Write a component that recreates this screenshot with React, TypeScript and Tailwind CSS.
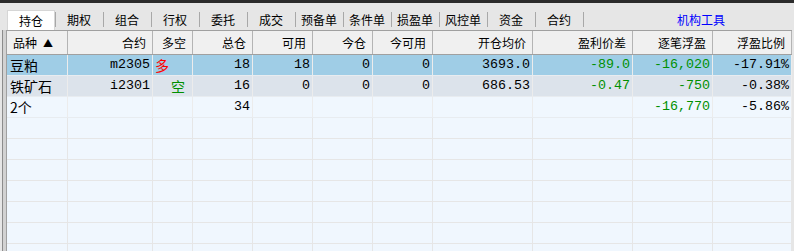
import React from "react";

type Col = { title: React.ReactNode; w: string; left?: boolean };

const cols: Col[] = [
  {
    title: (
      <>
        品种<span className="ml-[6px] text-[10px]">▲</span>
      </>
    ),
    w: "w-[61px]",
    left: true,
  },
  { title: "合约", w: "w-[85px]" },
  { title: "多空", w: "w-[40px]" },
  { title: "总仓", w: "w-[60px]" },
  { title: "可用", w: "w-[60px]" },
  { title: "今仓", w: "w-[60px]" },
  { title: "今可用", w: "w-[60px]" },
  { title: "开仓均价", w: "w-[100px]" },
  { title: "盈利价差", w: "w-[100px]" },
  { title: "逐笔浮盈", w: "w-[80px]" },
  { title: "浮盈比例", w: "w-[79px]" },
];

const tabs = ["持仓", "期权", "组合", "行权", "委托", "成交", "预备单", "条件单", "损盈单", "风控单", "资金", "合约"];

type Row = { bg: string; cells: React.ReactNode[] };

const G = "text-[#009000]";

const rows: Row[] = [
  {
    bg: "bg-[#9fcde6]",
    cells: [
      "豆粕",
      "m2305",
      <span className="text-[#ff0000]">多</span>,
      "18",
      "18",
      "0",
      "0",
      "3693.0",
      <span className={G}>-89.0</span>,
      <span className={G}>-16,020</span>,
      "-17.91%",
    ],
  },
  {
    bg: "bg-[#dce3eb]",
    cells: [
      "铁矿石",
      "i2301",
      <span className={G}>空</span>,
      "16",
      "0",
      "0",
      "0",
      "686.53",
      <span className={G}>-0.47</span>,
      <span className={G}>-750</span>,
      "-0.38%",
    ],
  },
  {
    bg: "bg-[#f0f7fe]",
    cells: ["2个", "", "", "34", "", "", "", "", "", <span className={G}>-16,770</span>, "-5.86%"],
  },
];

const cjk = "font-['Noto_Sans_CJK_SC',sans-serif]";
const mono = "font-['Liberation_Mono','Noto_Sans_CJK_SC',monospace]";

export default function App() {
  const empty = Array.from({ length: 8 });
  return (
    <div className="w-[794px] h-[251px] overflow-hidden bg-[#e6e6e6] flex flex-col">
      <div className="h-[3px] bg-[#2b2b2b] shrink-0" />

      {/* tab strip */}
      <div className={`h-[27px] shrink-0 flex items-end pl-[7px] ${cjk} text-[12px] text-black`}>
        {tabs.map((t, i) =>
          i === 0 ? (
            <div
              key={t}
              className="w-[48px] h-[20px] bg-white border border-b-0 border-[#d6d6d6] flex items-center justify-center"
            >
              {t}
            </div>
          ) : (
            <div key={t} className="w-[48px] h-[20px] flex items-center justify-center relative">
              <span className="absolute left-0 top-[2px] h-[15px] w-px bg-[#a8a8a8]" />
              {t}
            </div>
          )
        )}
        <div className="h-[20px] flex items-center relative pl-[94px] text-[#0000ff]">
          <span className="absolute left-0 top-[2px] h-[15px] w-px bg-[#a8a8a8]" />
          机构工具
        </div>
      </div>

      {/* grid */}
      <div className="flex flex-1 min-h-0">
        <div className="w-[7px] flex shrink-0">
          <div className="w-[2px]" />
          <div className="w-px bg-[#8c8c8c]" />
          <div className="w-[3px] bg-[#d2d2d2]" />
          <div className="w-px bg-[#a0a0a0]" />
        </div>
        <div className="w-[785px] border-t border-[#a0a0a0] bg-[#f0f7fe]">
          <div className={`flex h-[24px] bg-[#f0f0f0] border-b border-[#a0a0a0] ${cjk} text-[12px] text-black`}>
            {cols.map((c, ci) => (
              <div
                key={ci}
                className={`${c.w} shrink-0 h-full border-r border-[#b4b4b4] flex items-center ${
                  c.left ? "justify-start pl-[6px]" : "justify-end pr-[6px]"
                }`}
              >
                {c.title}
              </div>
            ))}
          </div>

          {rows.map((r, ri) => (
            <div key={ri} className={`flex h-[21px] ${r.bg} border-b border-[#e8ecf0] text-[13.33px] text-black`}>
              {cols.map((c, ci) => (
                <div
                  key={ci}
                  className={`${c.w} shrink-0 h-full border-r border-[#ececec] flex items-center whitespace-pre ${
                    ci === 0
                      ? `${cjk} text-[14px] pl-[3px]`
                      : ci === 2
                      ? `${cjk} text-[14px] ${ri === 0 ? "pl-[2px]" : "pl-[18px]"}`
                      : `${mono} justify-end pr-[2px]`
                  }`}
                >
                  {r.cells[ci]}
                </div>
              ))}
            </div>
          ))}

          {empty.map((_, i) => (
            <div key={i} className="flex h-[21px] bg-[#f0f7fe] border-b border-[#e6e6e6]">
              {cols.map((c, ci) => (
                <div key={ci} className={`${c.w} shrink-0 h-full border-r border-[#e6e6e6]`} />
              ))}
            </div>
          ))}
        </div>
      </div>
    </div>
  );
}
